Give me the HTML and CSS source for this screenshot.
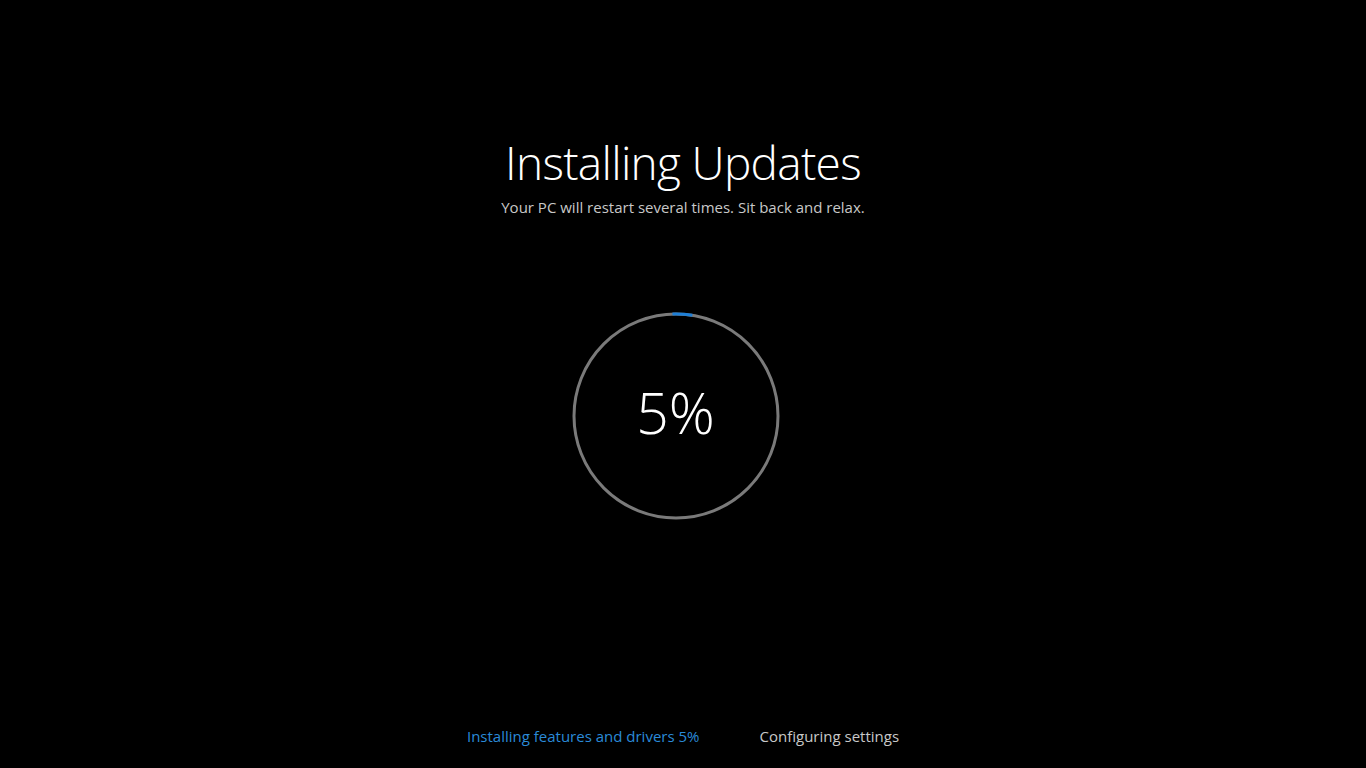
FILE: index.html
```html
<!DOCTYPE html>
<html>
<head>
  <meta charset="UTF-8" />
  <title>Installing Updates</title>
  <link rel="stylesheet" href="styles.css">
</head>
<body>
  <div class="screen">
    <div class="header">
      <h1>Installing Updates</h1>
      <p class="subtitle">Your PC will restart several times. Sit back and relax.</p>
    </div>

    <div class="progress">
      <svg class="ring" width="208" height="208" viewBox="0 0 208 208">
        <circle class="ring-track" cx="104" cy="104" r="102" />
        <circle class="ring-fill" cx="104" cy="104" r="102" />
      </svg>
      <div class="percent">5%</div>
    </div>

    <div class="steps">
      <span class="step active">Installing features and drivers 5%</span>
      <span class="step">Configuring settings</span>
    </div>
  </div>
</body>
</html>
```

FILE: styles.css
```css
html, body {
  margin: 0;
  padding: 0;
  background: #000;
}

body {
  font-family: "Open Sans", "Noto Sans", sans-serif;
  color: #fff;
}

.screen {
  height: 768px;
  display: flex;
  flex-direction: column;
  align-items: center;
}

.header {
  margin-top: 132px;
  text-align: center;
}

h1 {
  margin: 0;
  font-size: 46px;
  font-weight: 300;
  line-height: 60px;
  letter-spacing: -0.7px;
}

.subtitle {
  margin: 5px 0 0;
  font-size: 15px;
  line-height: 20px;
  color: #c8c8c8;
}

.progress {
  position: relative;
  margin-top: 95px;
  margin-right: 15px;
  width: 208px;
  height: 208px;
}

.ring {
  display: block;
}

.ring-track {
  fill: none;
  stroke: #7a7a7a;
  stroke-width: 3;
}

.ring-fill {
  fill: none;
  stroke: #1e7fd6;
  stroke-width: 3;
  stroke-dasharray: 20 700;
  transform: rotate(-92deg);
  transform-origin: 104px 104px;
}

.percent {
  position: absolute;
  inset: 0 0 8px 0;
  display: flex;
  align-items: center;
  justify-content: center;
  font-size: 57px;
  font-weight: 300;
}

.steps {
  margin-top: auto;
  margin-bottom: 22px;
  display: flex;
  gap: 60px;
  font-size: 15px;
  line-height: 20px;
  color: #c8c8c8;
}

.step.active {
  color: #2a8ad8;
}
```
